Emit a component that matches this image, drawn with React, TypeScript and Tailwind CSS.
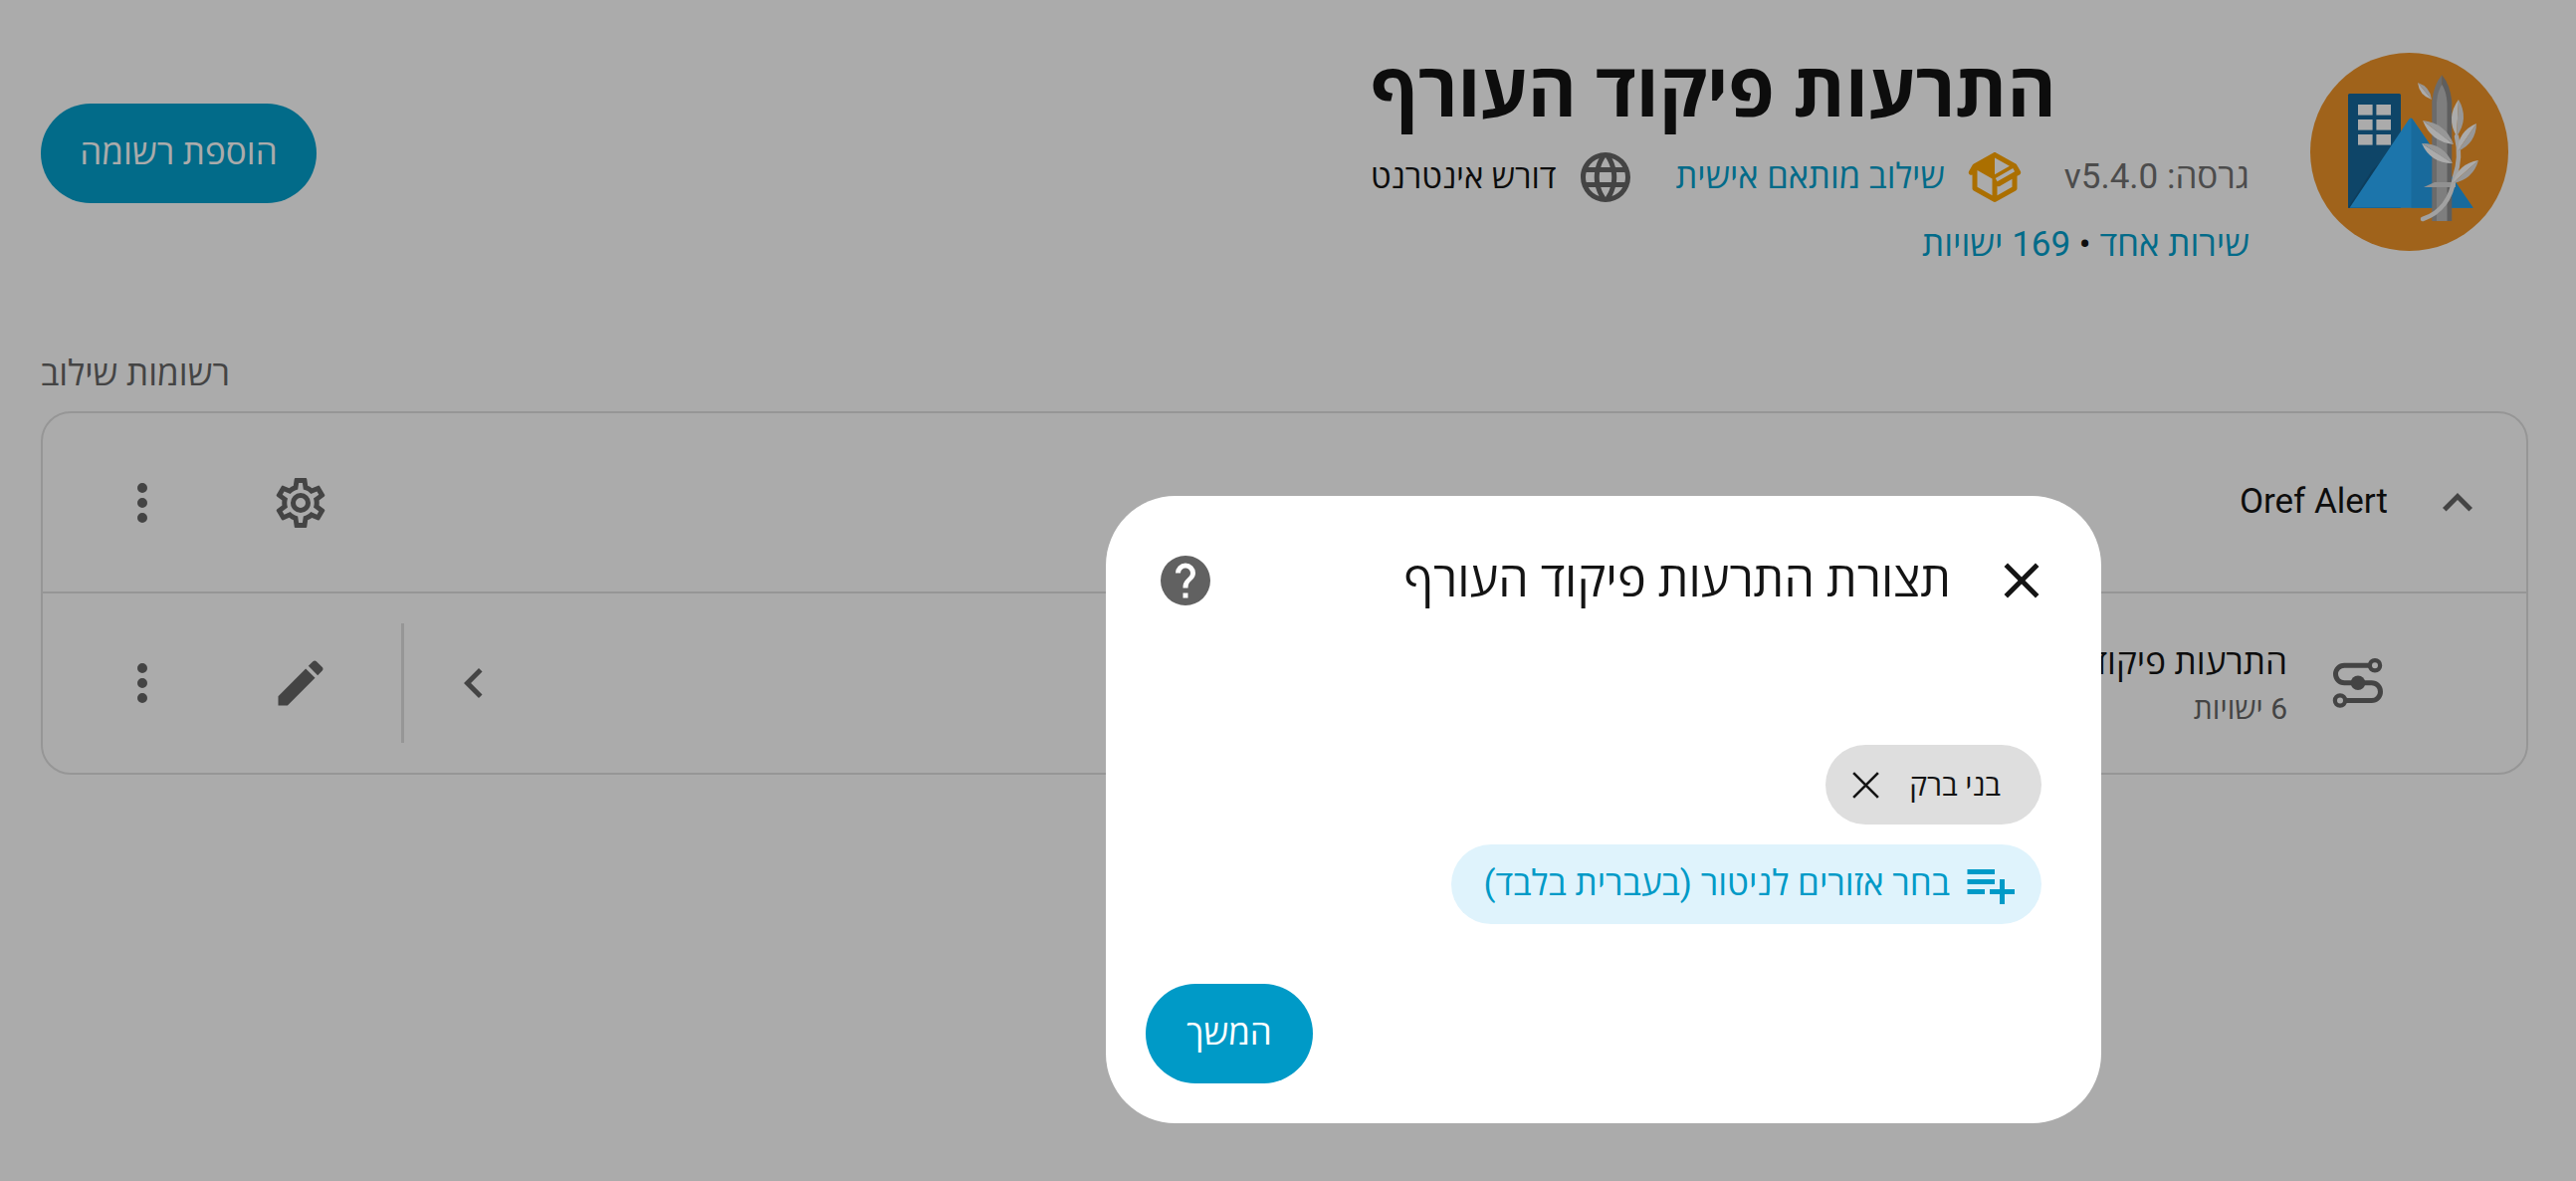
const mdi = {
  close: "M19,6.41L17.59,5L12,10.59L6.41,5L5,6.41L10.59,12L5,17.59L6.41,19L12,13.41L17.59,19L19,17.59L13.41,12L19,6.41Z",
  help: "M15.07,11.25L14.17,12.17C13.45,12.89 13,13.5 13,15H11V14.5C11,13.39 11.45,12.39 12.17,11.67L13.41,10.41C13.78,10.05 14,9.55 14,9C14,7.89 13.1,7 12,7A2,2 0 0,0 10,9H8A4,4 0 0,1 12,5A4,4 0 0,1 16,9C16,9.88 15.64,10.67 15.07,11.25M13,19H11V17H13M12,2A10,10 0 0,0 2,12A10,10 0 0,0 12,22A10,10 0 0,0 22,12C22,6.47 17.5,2 12,2Z",
  playlistPlus: "M3 16H10V14H3M18 14V10H16V14H12V16H16V20H18V16H22V14M14 6H3V8H14M14 10H3V12H14V10Z",
  dots: "M12,16A2,2 0 0,1 14,18A2,2 0 0,1 12,20A2,2 0 0,1 10,18A2,2 0 0,1 12,16M12,10A2,2 0 0,1 14,12A2,2 0 0,1 12,14A2,2 0 0,1 10,12A2,2 0 0,1 12,10M12,4A2,2 0 0,1 14,6A2,2 0 0,1 12,8A2,2 0 0,1 10,6A2,2 0 0,1 12,4Z",
  cog: "M12,8A4,4 0 0,1 16,12A4,4 0 0,1 12,16A4,4 0 0,1 8,12A4,4 0 0,1 12,8M12,10A2,2 0 0,0 10,12A2,2 0 0,0 12,14A2,2 0 0,0 14,12A2,2 0 0,0 12,10M10,22C9.75,22 9.54,21.82 9.5,21.58L9.13,18.93C8.5,18.68 7.96,18.34 7.44,17.94L4.95,18.95C4.73,19.03 4.46,18.95 4.34,18.73L2.34,15.27C2.21,15.05 2.27,14.78 2.46,14.63L4.57,12.97L4.5,12L4.57,11L2.46,9.37C2.27,9.22 2.21,8.95 2.34,8.73L4.34,5.27C4.46,5.05 4.73,4.96 4.95,5.05L7.44,6.05C7.96,5.66 8.5,5.32 9.13,5.07L9.5,2.42C9.54,2.18 9.75,2 10,2H14C14.25,2 14.46,2.18 14.5,2.42L14.87,5.07C15.5,5.32 16.04,5.66 16.56,6.05L19.05,5.05C19.27,4.96 19.54,5.05 19.66,5.27L21.66,8.73C21.79,8.95 21.73,9.22 21.54,9.37L19.43,11L19.5,12L19.43,13L21.54,14.63C21.73,14.78 21.79,15.05 21.66,15.27L19.66,18.73C19.54,18.95 19.27,19.04 19.05,18.95L16.56,17.95C16.04,18.34 15.5,18.68 14.87,18.93L14.5,21.58C14.46,21.82 14.25,22 14,22H10M11.25,4L10.88,6.61C9.68,6.86 8.62,7.5 7.85,8.39L5.44,7.35L4.69,8.65L6.8,10.2C6.4,11.37 6.4,12.64 6.8,13.8L4.68,15.36L5.43,16.66L7.86,15.62C8.63,16.5 9.68,17.14 10.87,17.38L11.24,20H12.76L13.13,17.39C14.32,17.14 15.37,16.5 16.14,15.62L18.57,16.66L19.32,15.36L17.2,13.81C17.6,12.64 17.6,11.37 17.2,10.2L19.31,8.65L18.56,7.35L16.15,8.39C15.38,7.5 14.32,6.86 13.12,6.62L12.75,4H11.25Z",
  pencil: "M20.71,7.04C21.1,6.65 21.1,6 20.71,5.63L18.37,3.29C18,2.9 17.35,2.9 16.96,3.29L15.12,5.12L18.87,8.87M3,17.25V21H6.75L17.81,9.93L14.06,6.18L3,17.25Z",
  chevronUp: "M7.41,15.41L12,10.83L16.59,15.41L18,14L12,8L6,14L7.41,15.41Z",
  chevronLeft: "M15.41,16.58L10.83,12L15.41,7.41L14,6L8,12L14,18L15.41,16.58Z",
  web: "M16.36,14C16.44,13.34 16.5,12.68 16.5,12C16.5,11.32 16.44,10.66 16.36,10H19.74C19.9,10.64 20,11.31 20,12C20,12.69 19.9,13.36 19.74,14M14.59,19.56C15.19,18.45 15.65,17.25 15.97,16H18.92C17.96,17.65 16.43,18.93 14.59,19.56M14.34,14H9.66C9.56,13.34 9.5,12.68 9.5,12C9.5,11.32 9.56,10.65 9.66,10H14.34C14.43,10.65 14.5,11.32 14.5,12C14.5,12.68 14.43,13.34 14.34,14M12,19.96C11.17,18.76 10.5,17.43 10.09,16H13.91C13.5,17.43 12.83,18.76 12,19.96M8,8H5.08C6.03,6.34 7.57,5.06 9.4,4.44C8.8,5.55 8.35,6.75 8,8M5.08,16H8C8.35,17.25 8.8,18.45 9.4,19.56C7.57,18.93 6.03,17.65 5.08,16M4.26,14C4.1,13.36 4,12.69 4,12C4,11.31 4.1,10.64 4.26,10H7.64C7.56,10.66 7.5,11.32 7.5,12C7.5,12.68 7.56,13.34 7.64,14M12,4.03C12.83,5.23 13.5,6.57 13.91,8H10.09C10.5,6.57 11.17,5.23 12,4.03M18.92,8H15.97C15.65,6.75 15.19,5.55 14.59,4.44C16.43,5.07 17.96,6.34 18.92,8M12,2C6.47,2 2,6.5 2,12A10,10 0 0,0 12,22A10,10 0 0,0 22,12A10,10 0 0,0 12,2Z",
  packageVariant: "M2,10.96C1.5,10.68 1.35,10.07 1.63,9.59L3.13,7C3.24,6.8 3.41,6.66 3.6,6.58L11.43,2.18C11.59,2.06 11.79,2 12,2C12.21,2 12.41,2.06 12.57,2.18L20.47,6.62C20.66,6.72 20.82,6.88 20.91,7.08L22.36,9.6C22.64,10.08 22.47,10.69 22,10.96L21,11.54V16.5C21,16.88 20.79,17.21 20.47,17.38L12.57,21.82C12.41,21.94 12.21,22 12,22C11.79,22 11.59,21.94 11.43,21.82L3.53,17.38C3.21,17.21 3,16.88 3,16.5V10.96C2.7,11.13 2.32,11.14 2,10.96M12,4.15V4.15L12,10.85V10.85L17.96,7.5L12,4.15M5,15.91L11,19.29V12.58L5,9.21V15.91M19,15.91V12.69L14,15.59C13.67,15.77 13.3,15.76 13,15.6V19.29L19,15.91M13.04,13.72L20.04,9.72L19.3,8.44L12.3,12.44L13.04,13.72Z",
};

function Icon({ path, className }: { path: string; className: string }) {
  return (
    <svg viewBox="0 0 24 24" className={`shrink-0 fill-current ${className}`}>
      <path d={path} />
    </svg>
  );
}

// leaf between a tip and a base point, bulged to both sides
function Leaf({ x1, y1, x2, y2, w }: { x1: number; y1: number; x2: number; y2: number; w: number }) {
  const mx = (x1 + x2) / 2;
  const my = (y1 + y2) / 2;
  const len = Math.hypot(x2 - x1, y2 - y1);
  const nx = (-(y2 - y1) / len) * w;
  const ny = ((x2 - x1) / len) * w;
  return (
    <g>
      <path d={`M${x1} ${y1}Q${mx + nx} ${my + ny} ${x2} ${y2}Q${mx} ${my} ${x1} ${y1}Z`} fill="#ffffff" />
      <path d={`M${x1} ${y1}Q${mx - nx} ${my - ny} ${x2} ${y2}Q${mx} ${my} ${x1} ${y1}Z`} fill="#e2e2e2" />
    </g>
  );
}

function Logo() {
  return (
    <svg viewBox="0 0 200 200" className="w-[200px] h-[200px] shrink-0">
      <circle cx="99.5" cy="99.5" r="99.5" fill="#ef9429" />
      <rect x="38" y="41" width="53" height="115" rx="1.5" fill="#16679b" />
      <path d="M38 155.7L62 118L91 90V155.7Z" fill="#145c8a" />
      {[52, 67, 82].map((y) => (
        <g key={y} fill="#ffffff">
          <rect x="48" y={y} width="14.6" height="10.6" />
          <rect x="66.4" y={y} width="14.6" height="10.6" />
        </g>
      ))}
      <path d="M39.5 155.7L99 67Q101 64 103 67L163.7 155.7Z" fill="#2aafff" />
      <path d="M101.5 65.5Q102 65.5 103 67L163.7 155.7H101.5Z" fill="#249ee9" />
      <path d="M122.3 49Q124 32 132.3 22.3V169H122.3Z" fill="#a0a0a0" />
      <path d="M132.3 22.3Q140.5 32 142.3 49V169H132.3Z" fill="#8c8c8c" />
      <path d="M127 50Q128 38 132.3 32Q136.5 38 137.5 50V169H127Z" fill="#bcbcbc" />
      <path d="M114 135L125 130H146V135Z" fill="#d8d8d8" />
      <path d="M113 167Q140 158 145 125Q152 105 147 84" fill="none" stroke="#f0f0f0" strokeWidth="4.5" strokeLinecap="round" />
      <Leaf x1={108} y1={30} x2={122} y2={47} w={7} />
      <Leaf x1={149} y1={47} x2={147} y2={84} w={12} />
      <Leaf x1={167} y1={71} x2={148} y2={99} w={11} />
      <Leaf x1={169} y1={108} x2={143} y2={131} w={11} />
      <Leaf x1={113} y1={68} x2={144} y2={92} w={12} />
      <Leaf x1={112} y1={91} x2={143} y2={111} w={12} />
    </svg>
  );
}

function RowIcon() {
  return (
    <svg viewBox="0 0 24 24" fill="none" stroke="currentColor" strokeWidth="2" className="w-[60px] h-[60px] shrink-0 text-[#666666]">
      <path d="M17.2 4.9H6.9A3.5 3.5 0 0 0 6.9 11.9H17.85A3.55 3.55 0 0 1 17.85 19H7.2" />
      <circle cx="19.2" cy="4.9" r="2.05" strokeWidth="1.7" />
      <circle cx="5.2" cy="19" r="2.05" strokeWidth="1.7" />
      <circle cx="12.4" cy="11.9" r="2.9" fill="currentColor" stroke="none" />
    </svg>
  );
}

export default function App() {
  return (
    <div dir="rtl" className="relative w-[2588px] h-[1186px] overflow-hidden bg-white text-[#141414] text-[35px] font-['Roboto','Open_Sans',sans-serif]">
      <header className="flex items-start pt-[51px] pr-[67px] pl-[41px]">
        <div className="mt-[2px]">
          <Logo />
        </div>
        <div className="mr-[61px]">
          <h1 className="h-[80px] text-left text-[75px] leading-[80px] font-bold">התרעות פיקוד העורף</h1>
          <div className="flex items-center h-[60px] mt-[17px] gap-[40px]">
            <span className="text-[#727272]">גרסה: v5.4.0</span>
            <div className="flex items-center gap-[20px]">
              <Icon path={mdi.packageVariant} className="w-[60px] h-[60px] text-[#ffa600]" />
              <span className="text-[34.5px] text-[#03a0cc]">שילוב מותאם אישית</span>
            </div>
            <div className="flex items-center gap-[20px]">
              <Icon path={mdi.web} className="w-[60px] h-[60px] text-[#666666]" />
              <span className="text-[33px] font-medium">דורש אינטרנט</span>
            </div>
          </div>
          <div className="h-[50px] mt-[13px] leading-[50px]">
            <span className="text-[#03a0cc]">שירות אחד</span> • <span className="text-[#03a0cc]">169 ישויות</span>
          </div>
        </div>
        <button className="mr-auto mt-[53px] w-[277px] h-[100px] rounded-full bg-[#03a0cc] text-white font-medium">
          הוספת רשומה
        </button>
      </header>

      <section className="pl-[41px] pr-[48px] mt-[80px]">
        <h2 className="h-[50px] mb-[12px] leading-[50px] text-left text-[#666666]">רשומות שילוב</h2>
        <div className="h-[365px] rounded-[30px] border-[2.5px] border-[#e0e0e0]">
          <div className="flex items-center h-[181px] pr-[39px] pl-[70px] border-b-[2.5px] border-[#e0e0e0]">
            <Icon path={mdi.chevronUp} className="w-[60px] h-[60px] text-[#666666]" />
            <span className="mr-[40px]">Oref Alert</span>
            <div className="flex items-center gap-[99px] mr-auto">
              <Icon path={mdi.cog} className="w-[60px] h-[60px] text-[#666666]" />
              <Icon path={mdi.dots} className="w-[60px] h-[60px] text-[#666666]" />
            </div>
          </div>
          <div className="flex items-center h-[179px] pr-[140px] pl-[70px]">
            <RowIcon />
            <div className="mr-[40px] mt-[6px]">
              <div className="leading-[46px]">התרעות פיקוד העורף</div>
              <div className="text-[30px] leading-[46px] text-[#666666]">6 ישויות</div>
            </div>
            <div className="flex items-center mr-auto">
              <Icon path={mdi.chevronLeft} className="w-[60px] h-[60px] text-[#666666]" />
              <div className="w-[2.5px] h-[120px] mr-[40px] bg-[#e0e0e0]" />
              <Icon path={mdi.pencil} className="w-[60px] h-[60px] mr-[71px] text-[#666666]" />
              <Icon path={mdi.dots} className="w-[60px] h-[60px] mr-[99px] text-[#666666]" />
            </div>
          </div>
        </div>
      </section>

      {/* scrim + dialog */}
      <div className="absolute inset-0 bg-black/33" />
      <div className="absolute left-[1111px] top-[498px] flex flex-col w-[1000px] h-[630px] rounded-[70px] bg-white">
        <div className="flex items-center h-[60px] mt-[55px] px-[50px]">
          <Icon path={mdi.close} className="w-[60px] h-[60px] text-[#141414]" />
          <h2 className="mr-[41px] text-[48.5px] font-normal">תצורת התרעות פיקוד העורף</h2>
          <Icon path={mdi.help} className="w-[60px] h-[60px] mr-auto text-[#616161]" />
        </div>
        <div className="flex flex-col items-start gap-[20px] mt-[135px] pr-[60px]">
          <div className="flex items-center h-[80px] rounded-full bg-[#dedede] pr-[41px] pl-[18px] gap-[21px]">
            <span className="text-[30px]">בני ברק</span>
            <svg viewBox="0 0 24 24" className="w-[45px] h-[45px] shrink-0" fill="none" stroke="#141414" strokeWidth="1.4">
              <path d="M5.4 5.4L18.6 18.6M18.6 5.4L5.4 18.6" />
            </svg>
          </div>
          <div className="flex items-center h-[80px] rounded-full bg-[#dff3fc] pr-[22px] pl-[33px] gap-[10px] text-[#009ac7]">
            <Icon path={mdi.playlistPlus} className="w-[60px] h-[60px]" />
            <span>בחר אזורים לניטור (בעברית בלבד)</span>
          </div>
        </div>
        <div className="flex justify-end mt-auto pb-[40px] pl-[40px]">
          <button className="w-[168px] h-[100px] rounded-full bg-[#009ac7] text-white font-medium">המשך</button>
        </div>
      </div>
    </div>
  );
}
